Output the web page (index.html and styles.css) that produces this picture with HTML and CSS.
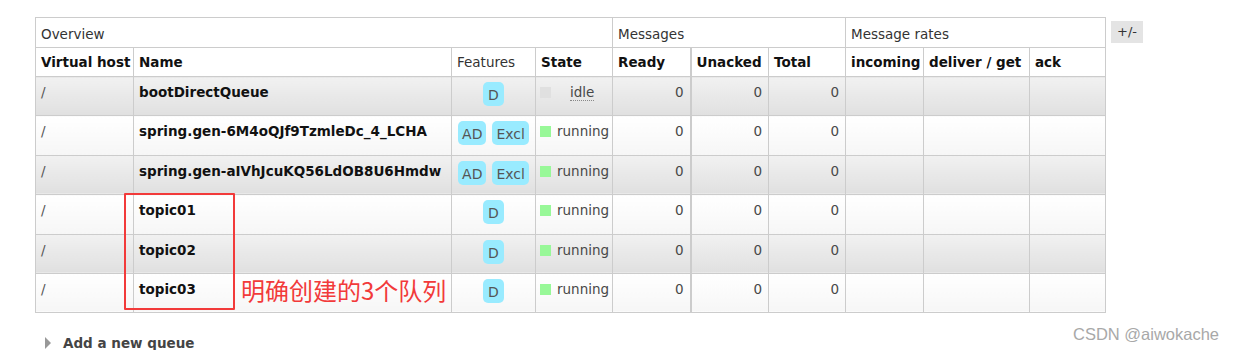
FILE: index.html
```html
<!DOCTYPE html>
<html>
<head>
<meta charset="utf-8">
<link rel="stylesheet" href="styles.css">
</head>
<body>
<div class="page">
  <div class="top">
    <table class="list">
      <colgroup>
        <col class="c-vh"><col class="c-name"><col class="c-feat"><col class="c-state">
        <col class="c-ready"><col class="c-unack"><col class="c-total">
        <col class="c-in"><col class="c-del"><col class="c-ack">
      </colgroup>
      <thead>
        <tr class="grp">
          <th colspan="4">Overview</th>
          <th colspan="3">Messages</th>
          <th colspan="3">Message rates</th>
        </tr>
        <tr class="hdr">
          <th>Virtual host</th>
          <th>Name</th>
          <th class="normal">Features</th>
          <th>State</th>
          <th class="sep">Ready</th>
          <th>Unacked</th>
          <th>Total</th>
          <th>incoming</th>
          <th>deliver / get</th>
          <th>ack</th>
        </tr>
      </thead>
      <tbody>
        <tr class="alt1">
          <td class="vh">/</td>
          <td class="name">bootDirectQueue</td>
          <td class="feat"><span class="badge">D</span></td>
          <td class="state"><span class="sq grey"></span><abbr class="idle">idle</abbr></td>
          <td class="num sep">0</td><td class="num">0</td><td class="num">0</td>
          <td></td><td></td><td></td>
        </tr>
        <tr class="alt2">
          <td class="vh">/</td>
          <td class="name">spring.gen-6M4oQJf9TzmleDc_4_LCHA</td>
          <td class="feat"><span class="badge">AD</span><span class="badge">Excl</span></td>
          <td class="state"><span class="sq green"></span>running</td>
          <td class="num sep">0</td><td class="num">0</td><td class="num">0</td>
          <td></td><td></td><td></td>
        </tr>
        <tr class="alt1">
          <td class="vh">/</td>
          <td class="name">spring.gen-aIVhJcuKQ56LdOB8U6Hmdw</td>
          <td class="feat"><span class="badge">AD</span><span class="badge">Excl</span></td>
          <td class="state"><span class="sq green"></span>running</td>
          <td class="num sep">0</td><td class="num">0</td><td class="num">0</td>
          <td></td><td></td><td></td>
        </tr>
        <tr class="alt2">
          <td class="vh">/</td>
          <td class="name">topic01</td>
          <td class="feat"><span class="badge">D</span></td>
          <td class="state"><span class="sq green"></span>running</td>
          <td class="num sep">0</td><td class="num">0</td><td class="num">0</td>
          <td></td><td></td><td></td>
        </tr>
        <tr class="alt1">
          <td class="vh">/</td>
          <td class="name">topic02</td>
          <td class="feat"><span class="badge">D</span></td>
          <td class="state"><span class="sq green"></span>running</td>
          <td class="num sep">0</td><td class="num">0</td><td class="num">0</td>
          <td></td><td></td><td></td>
        </tr>
        <tr class="alt2">
          <td class="vh">/</td>
          <td class="name">topic03</td>
          <td class="feat"><span class="badge">D</span></td>
          <td class="state"><span class="sq green"></span>running</td>
          <td class="num sep">0</td><td class="num">0</td><td class="num">0</td>
          <td></td><td></td><td></td>
        </tr>
      </tbody>
    </table>
    <span class="toggle">+/-</span>
  </div>
  <div class="add"><span class="tri"></span>Add a new queue</div>
  <div class="mark-box"></div>
  <div class="mark-text">明确创建的3个队列</div>
  <div class="watermark">CSDN @aiwokache</div>
</div>
</body>
</html>
```

FILE: styles.css
```css
html, body {
  margin: 0;
  padding: 0;
  background: #fff;
}
body {
  font-family: "DejaVu Sans", Verdana, sans-serif;
  font-size: 13.5px;
  color: #484848;
}
.page {
  position: relative;
  width: 1250px;
  height: 350px;
  padding: 17px 0 0 35px;
  box-sizing: border-box;
}
.top {
  display: flex;
  align-items: flex-start;
  gap: 5px;
}
table.list {
  border-collapse: collapse;
  table-layout: fixed;
  width: 1071px;
}
.c-vh { width: 98px; }
.c-name { width: 318px; }
.c-feat { width: 84px; }
.c-state { width: 77px; }
.c-ready { width: 78px; }
.c-unack { width: 78px; }
.c-total { width: 77px; }
.c-in { width: 78px; }
.c-del { width: 106px; }
.c-ack { width: 76px; }

table.list th, table.list td {
  border: 1px solid #ccc;
  text-align: left;
  white-space: nowrap;
  overflow: hidden;
}
table.list tr.grp th {
  font-weight: normal;
  color: #333;
  height: 30px;
  padding: 2px 5px 0;
  line-height: 16px;
  box-sizing: border-box;
}
table.list tr.hdr th {
  font-weight: bold;
  color: #111;
  height: 29px;
  padding: 0 5px;
  box-sizing: border-box;
}
table.list tr.hdr th.normal {
  font-weight: normal;
  color: #333;
}
table.list .sep {
  border-right: 2px solid #ccc;
}
table.list td {
  height: 39.4px;
  box-sizing: border-box;
  padding: 6px 5px 0;
  vertical-align: top;
  line-height: 18px;
}
tr.alt1 td {
  background: linear-gradient(#f1f1f1, #e0e0e0);
}
tr.alt2 td {
  background: linear-gradient(#ffffff, #f6f6f6);
}
table.list td.vh { color: #555; }
table.list td.name {
  font-weight: bold;
  color: #111;
}
table.list td.feat {
  padding: 5px 2px 0 2px;
  text-align: center;
}
.badge {
  display: inline-block;
  background: #99ebff;
  color: #555;
  border-radius: 5px;
  height: 24px;
  line-height: 27px;
  padding: 0 4px;
  margin: 0 3px;
  min-width: 13px;
  font-size: 14px;
}
table.list td.state {
  padding-left: 4px;
  padding-top: 6px;
}
.sq {
  display: inline-block;
  width: 11px;
  height: 11px;
  margin-right: 6px;
  vertical-align: -1px;
}
.sq.grey { background: #e0e0e0; margin-right: 19px; }
.sq.green { background: #98f898; }
abbr.idle {
  text-decoration: none;
  border-bottom: 1px dotted #888;
}
table.list td.num {
  text-align: right;
  padding-right: 6px;
}
.toggle {
  display: inline-block;
  background: #e4e4e4;
  color: #333;
  font-size: 13px;
  padding: 0 6px;
  height: 22px;
  line-height: 22px;
  margin-top: 4px;
}
.add {
  margin-top: 22px;
  margin-left: 10px;
  font-weight: bold;
  color: #444;
  display: flex;
  align-items: center;
}
.tri {
  display: inline-block;
  width: 0;
  height: 0;
  border-left: 6px solid #999;
  border-top: 6px solid transparent;
  border-bottom: 6px solid transparent;
  margin-right: 12px;
}
.mark-box {
  position: absolute;
  left: 124px;
  top: 193px;
  width: 107px;
  height: 113px;
  border: 2px solid #f23a3a;
  border-radius: 1px;
}
.mark-text {
  position: absolute;
  left: 241px;
  top: 275px;
  font-family: "Noto Sans CJK SC", sans-serif;
  font-size: 24px;
  line-height: 30px;
  color: #f23a3a;
}
.watermark {
  position: absolute;
  left: 1073px;
  top: 325px;
  font-family: "Liberation Sans", Arial, sans-serif;
  font-size: 16.5px;
  color: #a8a8a8;
}
```
